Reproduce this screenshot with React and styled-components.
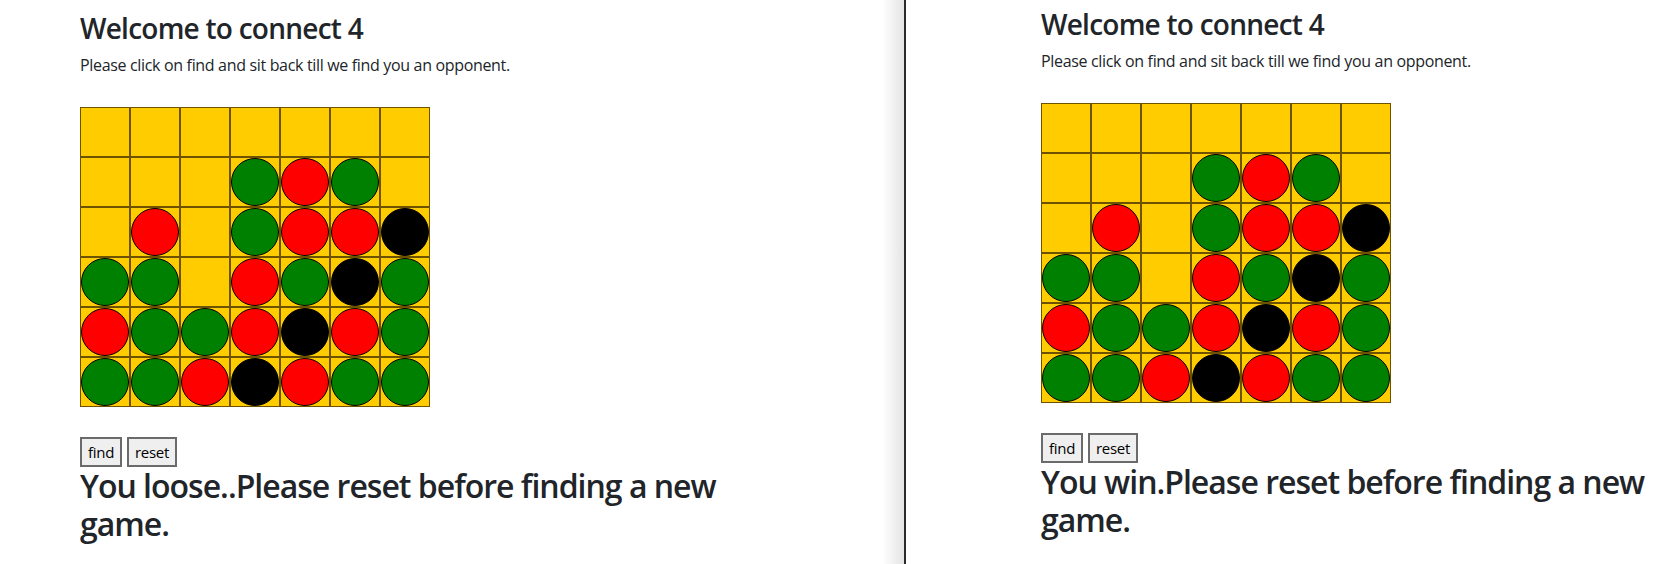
import React from 'react';
import styled, { createGlobalStyle } from 'styled-components';

const GlobalStyle = createGlobalStyle`
  body {
    margin: 0;
    font-family: 'Open Sans', 'Liberation Sans', sans-serif;
    color: #212529;
    background: #fff;
  }
`;

const Screen = styled.div`
  display: flex;
  width: 1671px;
  height: 564px;
  overflow: hidden;
`;

const LeftWindow = styled.div`
  flex: 0 0 904px;
  overflow: hidden;
  background: linear-gradient(to right, #fff calc(100% - 22px), #e4e4e4);
`;

const Divider = styled.div`
  flex: 0 0 2px;
  background: #2b2b2b;
`;

const RightWindow = styled.div`
  flex: 1;
  overflow: hidden;
  background: #fff;
`;

const Content = styled.div`
  padding: ${p => p.$top}px 0 0 ${p => p.$left}px;
  width: 660px;
`;

const Title = styled.h3`
  margin: 0 0 7px;
  font-size: 28px;
  line-height: 33.6px;
  font-weight: 600;
  letter-spacing: -0.75px;
`;

const Intro = styled.p`
  margin: 0;
  font-size: 16px;
  line-height: 24px;
  letter-spacing: -0.33px;
`;

const Board = styled.div`
  display: grid;
  grid-template-columns: repeat(7, 50px);
  grid-auto-rows: 50px;
  width: max-content;
  margin-top: 30px;
`;

const Cell = styled.div`
  box-sizing: border-box;
  border: 1px solid rgba(40, 25, 0, 0.68);
  background: #ffcc00;
  display: flex;
`;

const DISC_COLORS = { G: '#008000', R: '#ff0000', B: '#000000' };

const Disc = styled.div`
  flex: 1;
  box-sizing: border-box;
  border-radius: 50%;
  border: 1px solid #000;
  background: ${p => DISC_COLORS[p.$color]};
`;

const Controls = styled.div`
  display: flex;
  gap: 5px;
  margin-top: 30px;
`;

const Button = styled.button`
  box-sizing: border-box;
  height: 30px;
  padding: 1px 6px;
  font-family: inherit;
  font-size: 15px;
  line-height: 24px;
  letter-spacing: -0.3px;
  color: #000;
  background: #efefef;
  border: 2px solid #6b6b6b;
  border-radius: 0;
`;

const Status = styled.h2`
  margin: 0;
  font-size: 32px;
  line-height: 38px;
  font-weight: 600;
  letter-spacing: -1px;
`;

const board = [
  '.......',
  '...GRG.',
  '.R.GRRB',
  'GG.RGBG',
  'RGGRBRG',
  'GGRBRGG',
];

function Game({ left, top, message }) {
  return (
    <Content $left={left} $top={top}>
      <Title>Welcome to connect 4</Title>
      <Intro>Please click on find and sit back till we find you an opponent.</Intro>
      <Board>
        {board.map((row, r) =>
          row.split('').map((c, i) => (
            <Cell key={r + '-' + i}>{c !== '.' && <Disc $color={c} />}</Cell>
          )),
        )}
      </Board>
      <Controls>
        <Button>find</Button>
        <Button>reset</Button>
      </Controls>
      <Status>{message}</Status>
    </Content>
  );
}

export default function App() {
  return (
    <>
      <GlobalStyle />
      <Screen>
        <LeftWindow>
          <Game left={80} top={12} message="You loose..Please reset before finding a new game." />
        </LeftWindow>
        <Divider />
        <RightWindow>
          <Game left={135} top={8} message="You win.Please reset before finding a new game." />
        </RightWindow>
      </Screen>
    </>
  );
}
